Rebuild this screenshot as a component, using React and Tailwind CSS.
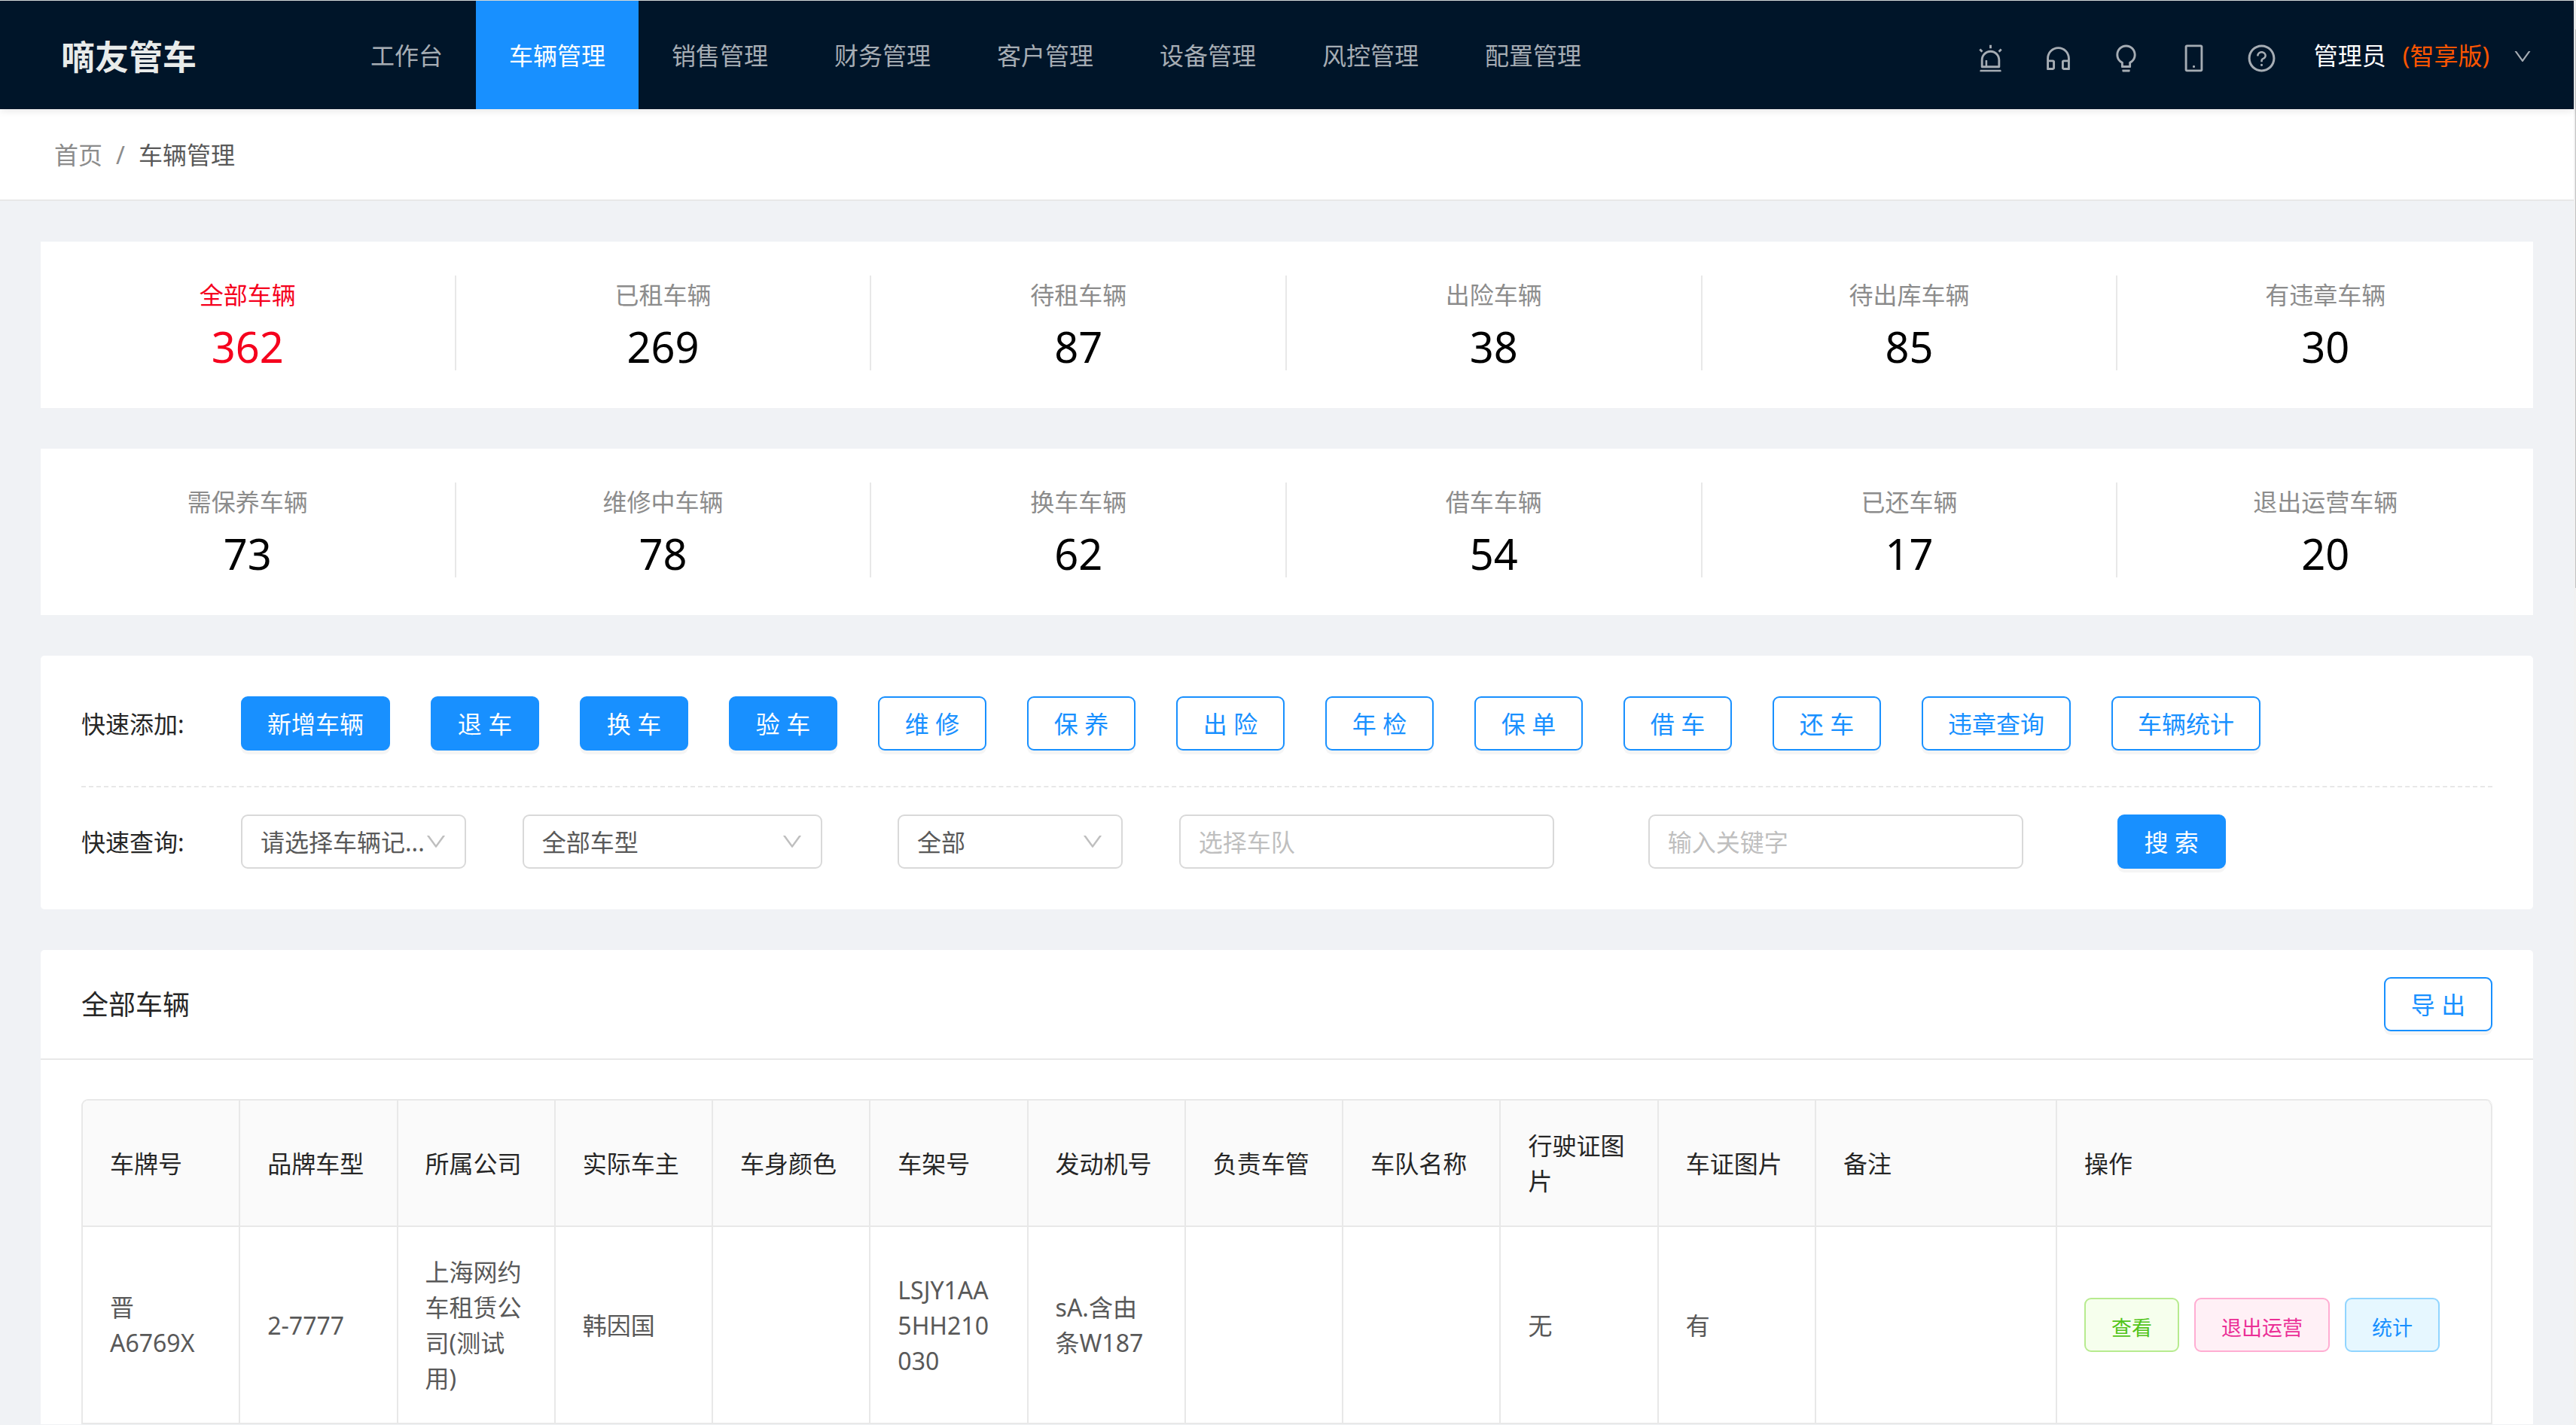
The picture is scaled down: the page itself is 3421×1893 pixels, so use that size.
import React, { useState } from 'react';
import {
  AiOutlineAlert,
  AiOutlineBulb,
  AiOutlineCustomerService,
  AiOutlineDown,
  AiOutlineMobile,
  AiOutlineQuestionCircle,
} from 'react-icons/ai';

const navItems = [
  '工作台',
  '车辆管理',
  '销售管理',
  '财务管理',
  '客户管理',
  '设备管理',
  '风控管理',
  '配置管理',
];

const tools = [
  { label: '报警', Icon: AiOutlineAlert },
  { label: '客服', Icon: AiOutlineCustomerService },
  { label: '建议', Icon: AiOutlineBulb },
  { label: '手机端', Icon: AiOutlineMobile },
  { label: '帮助', Icon: AiOutlineQuestionCircle },
];

const statRows = [
  [
    { title: '全部车辆', value: 362 },
    { title: '已租车辆', value: 269 },
    { title: '待租车辆', value: 87 },
    { title: '出险车辆', value: 38 },
    { title: '待出库车辆', value: 85 },
    { title: '有违章车辆', value: 30 },
  ],
  [
    { title: '需保养车辆', value: 73 },
    { title: '维修中车辆', value: 78 },
    { title: '换车车辆', value: 62 },
    { title: '借车车辆', value: 54 },
    { title: '已还车辆', value: 17 },
    { title: '退出运营车辆', value: 20 },
  ],
];

const quickActions = [
  { text: '新增车辆', primary: true },
  { text: '退 车', primary: true },
  { text: '换 车', primary: true },
  { text: '验 车', primary: true },
  { text: '维 修' },
  { text: '保 养' },
  { text: '出 险' },
  { text: '年 检' },
  { text: '保 单' },
  { text: '借 车' },
  { text: '还 车' },
  { text: '违章查询' },
  { text: '车辆统计' },
];

const columns = [
  { title: '车牌号', key: 'plate', width: 'w-[6.54%]' },
  { title: '品牌车型', key: 'model', width: 'w-[6.54%]' },
  { title: '所属公司', key: 'company', width: 'w-[6.54%]' },
  { title: '实际车主', key: 'owner', width: 'w-[6.54%]' },
  { title: '车身颜色', key: 'color', width: 'w-[6.54%]' },
  { title: '车架号', key: 'vin', width: 'w-[6.54%]' },
  { title: '发动机号', key: 'engine', width: 'w-[6.54%]' },
  { title: '负责车管', key: 'manager', width: 'w-[6.54%]' },
  { title: '车队名称', key: 'fleet', width: 'w-[6.54%]' },
  { title: '行驶证图片', key: 'license', width: 'w-[6.54%]' },
  { title: '车证图片', key: 'certificate', width: 'w-[6.54%]' },
  { title: '备注', key: 'remark', width: 'w-[10%]' },
];

const vehicles = [
  {
    plate: '晋A6769X',
    model: '2-7777',
    company: '上海网约车租赁公司(测试用)',
    owner: '韩因国',
    vin: 'LSJY1AA5HH210030',
    engine: 'sA.含由条W187',
    license: '无',
    certificate: '有',
  },
];

const Button = ({ primary, children }) => (
  <button
    type="button"
    className={`h-18 min-w-36 px-[33px] rounded-[9px] border-2 border-[#1890ff] shadow-[0_5px_0_rgba(0,0,0,0.04)] ${
      primary ? 'bg-[#1890ff] text-white' : 'bg-white text-[#1890ff]'
    }`}
  >
    {children}
  </button>
);

const Select = ({ id, label, options }) => (
  <div className="relative w-4/5">
    <select
      id={id}
      aria-label={label}
      className="appearance-none w-full h-18 pl-6 pr-12 rounded-[9px] border-2 border-[#d9d9d9] bg-white text-[#595959]"
    >
      {options.map((option) => (
        <option key={option}>{option}</option>
      ))}
    </select>
    <AiOutlineDown className="absolute right-6 top-5 size-8 text-[#bfbfbf] pointer-events-none" />
  </div>
);

const TextInput = ({ label }) => (
  <input
    type="text"
    aria-label={label}
    placeholder={label}
    className="w-4/5 h-18 px-6 rounded-[9px] border-2 border-[#d9d9d9] bg-white text-[#595959] placeholder:text-[#bfbfbf]"
  />
);

const Tag = ({ color, children }) => (
  <button type="button" className={`h-18 px-[34px] pt-1.5 rounded-[9px] border-2 text-[27px] ${color}`}>
    {children}
  </button>
);

const Header = () => {
  const [active, setActive] = useState('车辆管理');

  return (
    <header className="relative flex items-stretch h-36 bg-[#001529] shadow-[0_2px_10px_rgba(0,0,0,0.1)]">
      <h1 className="w-[448px] pl-[81px] pt-1 flex items-center text-[45px] font-bold text-[#e8ebea]">嘀友管车</h1>
      <nav className="flex">
        {navItems.map((item) => (
          <a
            key={item}
            href="#"
            onClick={() => setActive(item)}
            className={`flex items-center px-11 whitespace-nowrap ${
              item === active ? 'bg-[#1890ff] text-white' : 'text-[#a6adb4]'
            }`}
          >
            {item}
          </a>
        ))}
      </nav>
      <div className="flex ml-auto pr-[54px]">
        {tools.map(({ label, Icon }) => (
          <button key={label} type="button" aria-label={label} className="w-[90px] pt-2 flex items-center justify-center text-[#a6adb4]">
            <Icon className="size-[41px]" />
          </button>
        ))}
        <button type="button" className="flex items-center pl-6 text-white">
          <span>管理员</span>
          <span className="ml-[22px] text-[#ff5500]">(智享版)</span>
          <AiOutlineDown className="ml-[30px] mt-1 size-7 text-[#a6adb4]" />
        </button>
      </div>
    </header>
  );
};

const StatCard = ({ stats, selected }) => (
  <section className="grid grid-cols-6 bg-white pt-[45px] pb-[50px]">
    {stats.map(({ title, value }) => (
      <div
        key={title}
        className="h-[126px] flex flex-col items-center border-r-2 border-[#e8e8e8] last:border-r-0"
      >
        <div className={`leading-[52px] ${title === selected ? 'text-[#f5001d]' : 'text-[#8c8c8c]'}`}>{title}</div>
        <div className={`text-[56px] leading-[84px] ${title === selected ? 'text-[#f5001d]' : 'text-black'}`}>
          {value}
        </div>
      </div>
    ))}
  </section>
);

const FilterCard = () => (
  <section className="bg-white rounded-[5px] p-[54px]">
    <div className="flex items-center pb-[47px] border-b-2 border-dashed border-[#e8e8e8]">
      <div className="w-[212px] text-[#262626]">快速添加:</div>
      <div className="flex gap-[54px]">
        {quickActions.map(({ text, primary }) => (
          <Button key={text} primary={primary}>
            {text}
          </Button>
        ))}
      </div>
    </div>
    <form className="flex items-center pt-9" onSubmit={(e) => e.preventDefault()}>
      <label htmlFor="record" className="w-[212px] text-[#262626]">
        快速查询:
      </label>
      <div className="flex-1 grid grid-cols-24">
        <div className="col-span-3">
          <Select id="record" label="车辆记录" options={['请选择车辆记...']} />
        </div>
        <div className="col-span-4">
          <Select id="type" label="车型" options={['全部车型']} />
        </div>
        <div className="col-span-3">
          <Select id="status" label="状态" options={['全部']} />
        </div>
        <div className="col-span-5">
          <TextInput label="选择车队" />
        </div>
        <div className="col-span-5">
          <TextInput label="输入关键字" />
        </div>
        <div className="col-span-4">
          <Button primary>搜 索</Button>
        </div>
      </div>
    </form>
  </section>
);

const VehicleTable = () => (
  <section className="bg-white rounded-t-[5px]">
    <div className="flex items-center justify-between px-[54px] py-9 border-b-2 border-[#e8e8e8]">
      <h2 className="text-[36px] text-[#262626]">全部车辆</h2>
      <Button>导 出</Button>
    </div>
    <div className="px-[54px] pt-[52px]">
      <div className="rounded-t-[9px] border-t-2 border-l-2 border-[#e8e8e8] overflow-hidden">
        <table className="w-full table-fixed border-separate border-spacing-0 leading-[47px]">
          <thead>
            <tr className="bg-[#fafafa] text-left text-[#262626]">
              {columns.map(({ title, key, width }) => (
                <th key={key} className={`${width} p-9 border-r-2 border-b-2 border-[#e8e8e8] font-normal`}>
                  {title}
                </th>
              ))}
              <th className="p-9 border-r-2 border-b-2 border-[#e8e8e8] rounded-tr-[9px] font-normal">操作</th>
            </tr>
          </thead>
          <tbody>
            {vehicles.map((vehicle) => (
              <tr key={vehicle.vin} className="text-[#595959]">
                {columns.map(({ key }) => (
                  <td key={key} className="p-9 border-r-2 border-b-2 border-[#e8e8e8] break-words">
                    {vehicle[key]}
                  </td>
                ))}
                <td className="p-9 border-r-2 border-b-2 border-[#e8e8e8]">
                  <div className="flex gap-5">
                    <Tag color="bg-[#f6ffed] border-[#b7eb8f] text-[#52c41a]">查看</Tag>
                    <Tag color="bg-[#fff0f6] border-[#ffadd2] text-[#eb2f96]">退出运营</Tag>
                    <Tag color="bg-[#e6f7ff] border-[#91d5ff] text-[#1890ff]">统计</Tag>
                  </div>
                </td>
              </tr>
            ))}
          </tbody>
        </table>
      </div>
    </div>
  </section>
);

const App = () => {
  return (
    <div className="flex min-h-screen border-t border-[#d9dede] bg-[#f0f2f5] font-['Noto_Sans','Noto_Sans_CJK_SC',sans-serif] text-[32px] leading-[47px]">
      <div className="flex-1 min-w-0">
        <Header />
        <nav aria-label="面包屑" className="flex items-center gap-[18px] h-[122px] px-[72px] bg-white border-b-2 border-[#e8e8e8]">
          <a href="#" className="text-[#8c8c8c]">首页</a>
          <span className="text-[#8c8c8c]">/</span>
          <span className="text-[#595959]">车辆管理</span>
        </nav>
        <main className="flex flex-col gap-[54px] px-[54px] pt-[54px]">
          {statRows.map((stats) => (
            <StatCard key={stats[0].title} stats={stats} selected="全部车辆" />
          ))}
          <FilterCard />
          <VehicleTable />
        </main>
      </div>
      {/* Scroll track */}
      <div className="w-[3px] pt-[38px] pl-[2px] bg-[#f1f1f1]">
        <div className="h-2/5 bg-[#c1c1c1]" />
      </div>
    </div>
  );
};

export default App;
